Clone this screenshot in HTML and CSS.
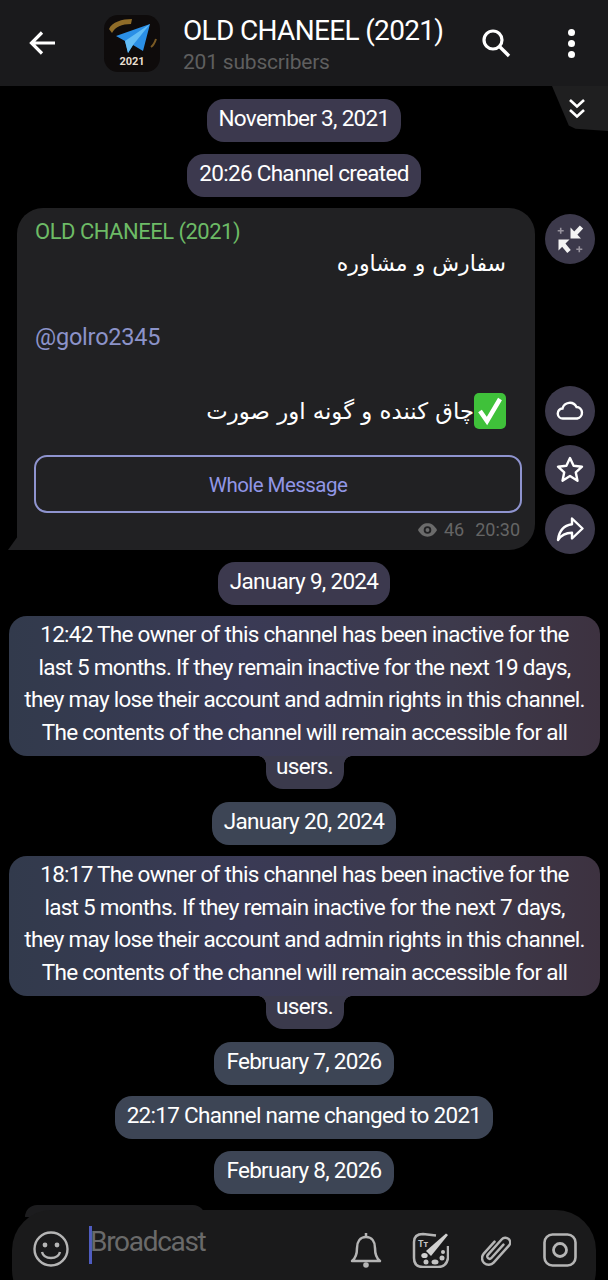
FILE: index.html
```html
<!DOCTYPE html>
<html lang="en">
<head>
    <meta charset="UTF-8">
    <meta name="viewport" content="width=device-width, initial-scale=1.0">
    <title>OLD CHANEEL (2021)</title>
    <link rel="stylesheet" href="styles.css">
</head>
<body>
    <div class="screen">
        <header class="topbar">
            <svg class="back-icon" viewBox="0 0 28 28"><path d="M26 14H3M13 3.500 2.500 14 13 24.500" fill="none" stroke="#fff" stroke-width="3.200"/></svg>
            <div class="avatar">
                <svg class="avatar-art" viewBox="0 0 56 40">
                    <path d="M5 14C8 7 18 4 28 4l-1 5C18 9 11 12 8 18z" fill="#8f6c28"/>
                    <path d="M46 9 12 21l9 5 3 12 5-8 10 6z" fill="#2a8fe6"/>
                    <path d="M46 9 21 26l3 12 5-8z" fill="#63bdf5"/>
                    <path d="M47 32c3-2 4-5 5-8" fill="none" stroke="#7a5a24" stroke-width="2"/>
                </svg>
                <span class="avatar-year">2021</span>
            </div>
            <div class="topbar-title">
                <div class="channel-name">OLD CHANEEL (2021)</div>
                <div class="subscribers">201 subscribers</div>
            </div>
            <svg class="search-icon" viewBox="0 0 30 30"><circle cx="12" cy="12" r="9" fill="none" stroke="#fff" stroke-width="3.200"/><path d="m18.500 18.500 9.500 9.500" stroke="#fff" stroke-width="3.400"/></svg>
            <div class="dots"><i></i><i></i><i></i></div>
        </header>

        <div class="jump-tab">
            <svg viewBox="0 0 20 22"><path d="m3 2 7 6.500L17 2M3 12l7 6.500 7-6.500" fill="none" stroke="#fff" stroke-width="2.600"/></svg>
        </div>

        <main class="feed">
            <div class="pill pill-violet">November 3, 2021</div>
            <div class="pill pill-violet">20:26 Channel created</div>

            <div class="post-row">
                <article class="bubble">
                    <div class="post-author">OLD CHANEEL (2021)</div>
                    <div class="post-fa first-fa" dir="rtl">سفارش و مشاوره</div>
                    <a class="post-link">@golro2345</a>
                    <div class="post-fa check-line" dir="rtl">
                        <svg class="check-emoji" viewBox="0 0 32 36"><rect x="0" y="0" width="32" height="36" rx="5" fill="#3fc13a"/><path d="m6 18 7 10L26 6" fill="none" stroke="#fff" stroke-width="4.500"/></svg><span>چاق کننده و گونه اور صورت</span>
                    </div>
                    <button class="whole-btn">Whole Message</button>
                    <div class="post-meta">
                        <svg class="eye-icon" viewBox="0 0 22 16"><path d="M1 8c3-5 6-7 10-7s7 2 10 7c-3 5-6 7-10 7S4 13 1 8z" fill="#6b6b6b"/><circle cx="11" cy="8" r="4" fill="#212123"/><circle cx="11" cy="8" r="2" fill="#6b6b6b"/></svg>
                        <span class="views">46</span>
                        <span>20:30</span>
                    </div>
                </article>
                <div class="side-actions">
                    <div class="side-btn">
                        <svg viewBox="0 0 28 28"><path d="M14.500 13.500V2.500L25 13.500z" fill="#f4f4f4"/><path d="m18 10 7.500-8" stroke="#f4f4f4" stroke-width="4.500"/><path d="M2.500 14.500h11L2.500 25.500z" fill="#f4f4f4"/><path d="m6 18 7 8.500" stroke="#f4f4f4" stroke-width="4.500"/><path d="M4.700 2.700v6M1.700 5.700h6M23.300 21.300v6M20.300 24.300h6" stroke="#98949f" stroke-width="1.600"/></svg>
                    </div>
                    <div class="side-gap"></div>
                    <div class="side-btn">
                        <svg viewBox="0 0 28 28"><path d="M7 21.500a5 5 0 0 1-.5-10A7.500 7.500 0 0 1 20.500 10a5.800 5.800 0 0 1 .7 11.500z" fill="none" stroke="#fff" stroke-width="2.400"/></svg>
                    </div>
                    <div class="side-btn">
                        <svg viewBox="0 0 28 28"><path d="m14 2 3.600 7.700 8.400 1-6.200 5.700 1.700 8.300L14 20l-7.500 4.700 1.700-8.300L2 10.700l8.400-1z" fill="none" stroke="#fff" stroke-width="2.400" stroke-linejoin="round"/></svg>
                    </div>
                    <div class="side-btn">
                        <svg viewBox="0 0 28 28"><path d="M16 3.500 26.500 13.500 16 23.500v-5.800C10 17.700 5.500 19.500 2 25c1-9 6-14.500 14-15.700z" fill="none" stroke="#fff" stroke-width="2.400" stroke-linejoin="round"/></svg>
                    </div>
                </div>
            </div>

            <div class="pill pill-violet">January 9, 2024</div>

            <div class="notice">
                <div class="notice-main">12:42 The owner of this channel has been inactive for the<br>last 5 months. If they remain inactive for the next 19 days,<br>they may lose their account and admin rights in this channel.<br>The contents of the channel will remain accessible for all</div>
                <div class="notice-tail">users.</div>
            </div>

            <div class="pill pill-slate">January 20, 2024</div>

            <div class="notice">
                <div class="notice-main">18:17 The owner of this channel has been inactive for the<br>last 5 months. If they remain inactive for the next 7 days,<br>they may lose their account and admin rights in this channel.<br>The contents of the channel will remain accessible for all</div>
                <div class="notice-tail">users.</div>
            </div>

            <div class="pill pill-slate">February 7, 2026</div>
            <div class="pill pill-slate">22:17 Channel name changed to 2021</div>
            <div class="pill pill-slate">February 8, 2026</div>
            <div class="peek"></div>
        </main>

        <footer class="composer-wrap">
            <div class="composer">
                <svg class="tool smile" viewBox="0 0 36 36"><circle cx="18" cy="18" r="16.500" fill="none" stroke="#b5b5b5" stroke-width="2.400"/><circle cx="12" cy="14" r="2.400" fill="#b5b5b5"/><circle cx="24" cy="14" r="2.400" fill="#b5b5b5"/><path d="M9 21c2 8 16 8 18 0" fill="none" stroke="#b5b5b5" stroke-width="2.400"/></svg>
                <div class="caret"></div>
                <div class="placeholder">Broadcast</div>
                <svg class="tool bell" viewBox="0 0 32 36"><path d="M2 29c4-3 5-7 5-13S10 5 16 5s9 5 9 11 1 10 5 13z" fill="none" stroke="#b5b5b5" stroke-width="2.500" stroke-linejoin="round"/><path d="M16 5V1" stroke="#b5b5b5" stroke-width="2.500"/><circle cx="16" cy="33" r="2.800" fill="#b5b5b5"/></svg>
                <svg class="tool palette" viewBox="0 0 37 36"><path d="M24 3.500 11 2C5 2 2 5 2 10v16c0 6 3 9 9 9h15c6 0 9-3 10-9V14" fill="none" stroke="#b5b5b5" stroke-width="2.500"/><path d="M36 3 34 1.500 14 19l5 5z" fill="#d0d0d0"/><ellipse cx="12.500" cy="23.500" rx="3.200" ry="2.600" fill="#d0d0d0"/><text class="palette-text" x="6" y="15">Tт</text><circle cx="14" cy="30" r="2.500" fill="#c4c4c4"/><ellipse cx="23" cy="30" rx="3.500" ry="2.500" fill="#c4c4c4"/><circle cx="30" cy="26" r="2.500" fill="#c4c4c4"/><circle cx="31" cy="20" r="2" fill="#c4c4c4"/></svg>
                <svg class="tool clip" viewBox="0 0 30 34"><g transform="translate(15 17) rotate(42) scale(.95) translate(-8 -19.500)"><path d="M10 10v19a2.500 2.500 0 0 1-5 0V7a5 5 0 0 1 10 0v24a7 7 0 0 1-14 0V14" fill="none" stroke="#b5b5b5" stroke-width="2.600" stroke-linecap="round"/></g></svg>
                <svg class="tool camera" viewBox="0 0 34 34"><rect x="1.500" y="1.500" width="31" height="31" rx="8" fill="none" stroke="#b5b5b5" stroke-width="2.600"/><circle cx="17" cy="17" r="6.500" fill="none" stroke="#b5b5b5" stroke-width="2.800"/></svg>
            </div>
        </footer>
    </div>
</body>
</html>
```

FILE: styles.css
```css
* {
    box-sizing: border-box;
}

body {
    margin: 0;
    background-color: #000;
    color: #fff;
    font-family: 'Roboto', sans-serif;
}

.screen {
    position: relative;
    width: 608px;
    height: 1280px;
    overflow: hidden;
    display: flex;
    flex-direction: column;
}

/* top bar */
.topbar {
    flex: none;
    height: 86px;
    background-color: #1a1a1c;
    display: flex;
    align-items: center;
    padding-left: 29px;
}

.back-icon {
    width: 28px;
    height: 28px;
    flex: none;
}

.avatar {
    flex: none;
    width: 56px;
    height: 57px;
    margin-left: 47px;
    border-radius: 14px;
    background-color: #0e0b0b;
    display: flex;
    flex-direction: column;
    align-items: center;
}

.avatar-art {
    width: 56px;
    height: 40px;
}

.avatar-year {
    font-size: 11px;
    font-weight: 700;
    color: #e8dfd0;
    line-height: 13px;
}

.topbar-title {
    margin-left: 23px;
    width: 301px;
    flex: none;
}

.channel-name {
    font-size: 28px;
    line-height: 34px;
    letter-spacing: -0.67px;
    margin-top: 2px;
}

.subscribers {
    font-size: 21px;
    line-height: 26px;
    letter-spacing: -0.2px;
    margin-top: 1px;
    color: #5f5f5f;
}

.search-icon {
    width: 30px;
    height: 30px;
    flex: none;
    margin-left: -3px;
}

.dots {
    margin-left: 57px;
    display: flex;
    flex-direction: column;
    gap: 4px;
}

.dots i {
    display: block;
    width: 7px;
    height: 7px;
    border-radius: 50%;
    background-color: #fff;
}

.jump-tab {
    position: absolute;
    top: 86px;
    right: 0;
    width: 56px;
    height: 45px;
    background-color: #1f1f20;
    clip-path: polygon(0 0, 100% 0, 100% 100%, 42% 95%, 30% 88%);
    padding: 12px 0 0 15px;
}

.jump-tab svg {
    display: block;
    width: 20px;
    height: 22px;
}

/* feed */
.feed {
    flex: 1;
    min-height: 0;
    padding-top: 13px;
    display: flex;
    flex-direction: column;
    align-items: center;
    gap: 11.500px;
}

.feed > * {
    flex: none;
}

.pill {
    padding: 0 12px;
    height: 43px;
    line-height: 38px;
    font-size: 22.500px;
    letter-spacing: -0.7px;
    border-radius: 17px;
    white-space: nowrap;
}

.pill-violet {
    background-color: #3c394e;
}

.pill-slate {
    background-color: #3d4555;
}

.post-row {
    width: 100%;
    height: 342px;
    padding: 0 13px 0 17px;
    display: flex;
    justify-content: space-between;
}

.bubble {
    position: relative;
    width: 518px;
    height: 342px;
    background-color: #212123;
    border-radius: 26px 26px 26px 0;
    padding: 10px 14px 0 17px;
    display: flex;
    flex-direction: column;
}

.bubble::before {
    content: "";
    position: absolute;
    left: -9px;
    bottom: 0;
    width: 10px;
    height: 14px;
    background-color: #212123;
    clip-path: polygon(100% 0, 100% 100%, 0 100%);
}

.post-author {
    font-size: 22px;
    line-height: 28px;
    letter-spacing: -0.5px;
    margin-left: 1px;
    color: #6dbb66;
}

.post-fa {
    font-family: 'DejaVu Sans', sans-serif;
    font-size: 22px;
    padding-right: 15px;
    text-align: right;
    direction: rtl;
}

.first-fa {
    line-height: 36px;
}

.post-link {
    font-size: 23.500px;
    line-height: 30px;
    letter-spacing: -0.2px;
    color: #8c93c9;
    margin: 40px 0 0 1px;
}

.check-line {
    font-size: 22.800px;
    margin-top: 41px;
    height: 36px;
    display: flex;
    align-items: center;
}

.check-emoji {
    flex: none;
    width: 32px;
    height: 36px;
}

.whole-btn {
    margin-top: 26px;
    padding-top: 3px;
    width: 488px;
    height: 58px;
    flex: none;
    border: 2px solid #8f94cf;
    border-radius: 13px;
    background: transparent;
    color: #9196e6;
    font-family: 'Roboto', sans-serif;
    font-size: 20.500px;
    letter-spacing: -0.55px;
}

.post-meta {
    margin-top: 6px;
    display: flex;
    justify-content: flex-end;
    align-items: center;
    color: #656565;
    font-size: 18px;
    line-height: 21px;
    padding-right: 1px;
}

.eye-icon {
    width: 21px;
    height: 16px;
    margin-right: 6px;
}

.views {
    margin-right: 11px;
}

.side-actions {
    flex: none;
    width: 50px;
    padding-top: 6px;
    display: flex;
    flex-direction: column;
    gap: 9px;
}

.side-actions > * {
    flex: none;
}

.side-gap {
    height: 104px;
}

.side-btn {
    width: 50px;
    height: 50px;
    border-radius: 50%;
    background-color: #3c394b;
    display: flex;
    align-items: center;
    justify-content: center;
}

.side-btn svg {
    width: 28px;
    height: 28px;
}

/* service notices */
.notice {
    width: 100%;
    margin-bottom: 1px;
    padding: 0 8px 0 9px;
    display: flex;
    flex-direction: column;
    align-items: center;
    font-size: 22.500px;
    letter-spacing: -0.72px;
    line-height: 32.700px;
    text-align: center;
    white-space: nowrap;
}

.notice-main {
    width: 100%;
    padding-top: 2px;
    height: 140px;
    border-radius: 18px;
    background: linear-gradient(90deg, #323a4c, #3a3a55 40%, #3d3a4c 75%, #3d3240);
}

.notice-tail {
    position: relative;
    width: 78px;
    height: 33px;
    line-height: 20px;
    background-color: #3b3a4c;
    border-radius: 0 0 17px 17px;
}

.notice-tail::before,
.notice-tail::after {
    content: "";
    position: absolute;
    top: 0;
    width: 8px;
    height: 8px;
}

.notice-tail::before {
    left: -8px;
    background: radial-gradient(circle at 0 100%, transparent 7.500px, #3b3a4c 8px);
}

.notice-tail::after {
    right: -8px;
    background: radial-gradient(circle at 100% 100%, transparent 7.500px, #3b3a4c 8px);
}

.peek {
    align-self: flex-start;
    margin-left: 25px;
    width: 180px;
    height: 12px;
    background-color: #1c1c1e;
    border-radius: 12px 12px 0 0;
}

/* bottom input */
.composer-wrap {
    flex: none;
    height: 70px;
    padding: 0 12px;
    position: relative;
}

.composer {
    height: 100px;
    border-radius: 40px;
    background-color: #1a1a1b;
    display: flex;
    align-items: flex-start;
    padding: 20px 0 0 21px;
}

.tool {
    flex: none;
}

.smile {
    width: 36px;
    height: 36px;
    margin-top: 1px;
}

.caret {
    width: 3px;
    height: 38px;
    margin-left: 20px;
    margin-top: -4px;
    background-color: #4f5cc0;
}

.placeholder {
    width: 260px;
    margin-left: -2px;
    margin-top: -7px;
    font-size: 28px;
    line-height: 38px;
    letter-spacing: -1.3px;
    color: #6a6a6a;
}

.bell {
    width: 32px;
    height: 36px;
    margin-top: 2px;
}

.palette {
    width: 37px;
    height: 36px;
    margin-top: 2px;
    margin-left: 30px;
}

.palette-text {
    font-family: 'Roboto', sans-serif;
    font-size: 9px;
    font-weight: 700;
    fill: #c4c4c4;
}

.clip {
    width: 30px;
    height: 34px;
    margin-top: 3px;
    margin-left: 32px;
}

.camera {
    width: 34px;
    height: 34px;
    margin-top: 3px;
    margin-left: 32px;
}
```
